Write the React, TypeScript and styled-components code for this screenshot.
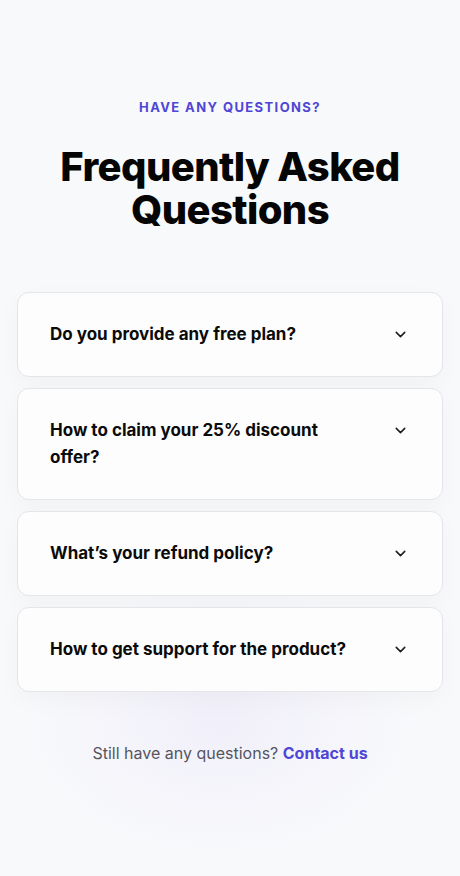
import React from 'react';
import styled, { createGlobalStyle } from 'styled-components';

const GlobalStyle = createGlobalStyle`
  html, body {
    margin: 0;
    padding: 0;
    background: #f8f9fb;
  }
  body {
    font-family: Inter, 'Liberation Sans', sans-serif;
  }
`;

const faqs = [
  'Do you provide any free plan?',
  'How to claim your 25% discount offer?',
  'What’s your refund policy?',
  'How to get support for the product?',
];

const Chevron = () => (
  <svg width="17" height="17" viewBox="0 0 24 24" fill="none" stroke="#1f1f1f" strokeWidth="2.2" strokeLinecap="round" strokeLinejoin="round">
    <path d="M6 9l6 6 6-6" />
  </svg>
);

const App = () => {
  return (
    <>
      <GlobalStyle />
      <Section>
        <Eyebrow>HAVE ANY QUESTIONS?</Eyebrow>
        <Title>
          Frequently Asked
          <br />
          Questions
        </Title>

        <List>
          {faqs.map((q) => (
            <Card key={q}>
              <Question>{q}</Question>
              <IconWrap>
                <Chevron />
              </IconWrap>
            </Card>
          ))}
        </List>

        <Footer>
          Still have any questions? <ContactLink href="#">Contact us</ContactLink>
        </Footer>
      </Section>
    </>
  );
};

const Section = styled.main`
  min-height: 876px;
  box-sizing: border-box;
  padding: 99px 17px 0;
  display: flex;
  flex-direction: column;
  align-items: center;
  background:
    radial-gradient(ellipse 260px 180px at 220px 720px, rgba(236, 233, 250, 0.6), transparent 75%),
    #f8f9fb;
`;

const Eyebrow = styled.p`
  margin: 0;
  font-size: 13px;
  font-weight: 700;
  letter-spacing: 1.4px;
  color: #4f46d6;
`;

const Title = styled.h2`
  margin: 30px 0 0;
  font-size: 40px;
  line-height: 43px;
  font-weight: 800;
  letter-spacing: -0.6px;
  color: #050505;
  text-align: center;
`;

const List = styled.div`
  margin-top: 61px;
  width: 100%;
  display: flex;
  flex-direction: column;
  gap: 11px;
`;

const Card = styled.div`
  box-sizing: border-box;
  display: flex;
  align-items: flex-start;
  justify-content: space-between;
  gap: 24px;
  padding: 28px 32px;
  background: #fdfdfe;
  border: 1.5px solid #e4e5e9;
  border-radius: 12px;
  box-shadow: 0 8px 24px rgba(20, 20, 40, 0.03);
`;

const Question = styled.span`
  font-size: 17px;
  line-height: 27px;
  font-weight: 700;
  color: #0b0b0b;
  max-width: 300px;
`;

const IconWrap = styled.span`
  display: flex;
  align-items: center;
  height: 27px;
  margin-right: 1px;
`;

const Footer = styled.p`
  margin: 51px 0 0;
  font-size: 16px;
  color: #55555f;
`;

const ContactLink = styled.a`
  color: #4f46d6;
  font-weight: 700;
  text-decoration: none;
`;

export default App;
